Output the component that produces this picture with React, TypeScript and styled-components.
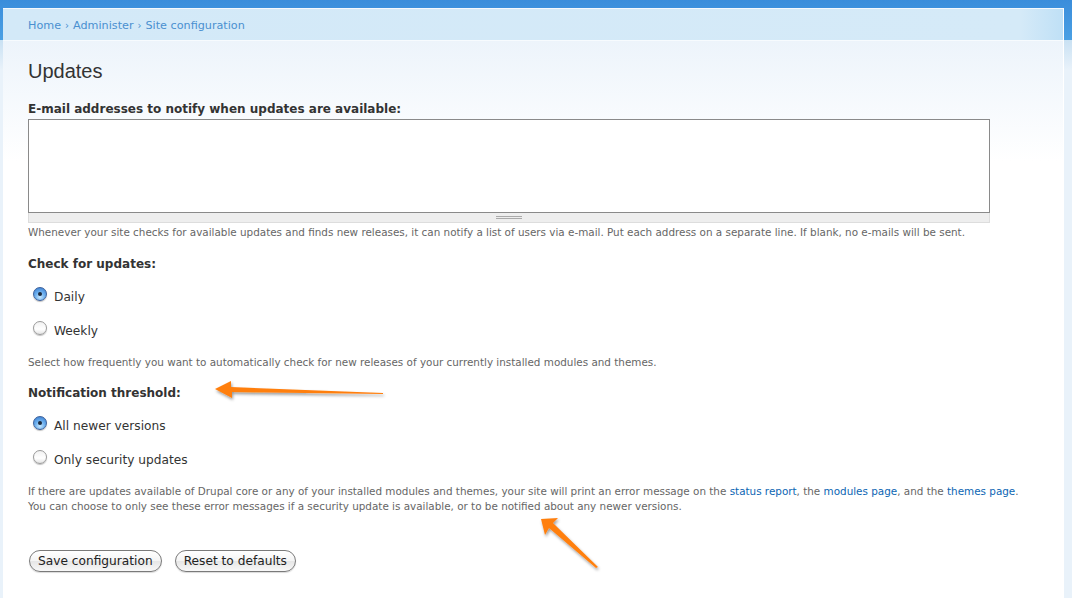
import React from 'react';
import styled, { createGlobalStyle } from 'styled-components';

const GlobalStyle = createGlobalStyle`
  html, body {
    margin: 0;
    padding: 0;
  }
  body {
    font-family: "DejaVu Sans", Verdana, sans-serif;
    color: #333;
  }
`;

const Page = styled.div`
  position: relative;
  width: 1072px;
  height: 598px;
  overflow: hidden;
  box-sizing: border-box;
  padding: 8px 8px 0 3px;
  background: linear-gradient(
    to bottom,
    #3a8ddb 0,
    #4aa0e4 40px,
    #c9e1f3 40px,
    #e9f2fa 70px,
    #e9f2fa 100%
  );
`;

const Panel = styled.div`
  height: 100%;
  background: #fff;
  border-right: 1px solid #fff;
  border-top: 1px solid #f4f9fd;
  box-sizing: border-box;
`;

const Breadcrumb = styled.div`
  height: 32px;
  display: flex;
  align-items: center;
  padding: 2px 0 0 25px;
  box-sizing: border-box;
  font-size: 11.2px;
  background: linear-gradient(to right, #d3e9f8 0, #d5eaf8 96%, #bfe0f6 100%);
  border-bottom: 1px solid #f7fbfe;
  color: #4a90d0;

  a {
    color: #4a90d0;
    text-decoration: none;
  }
`;

const Sep = styled.span`
  margin: 0 4px;
  font-size: 10px;
`;

const Content = styled.div`
  padding: 18px 0 0 25px;
  background: linear-gradient(to bottom, #edf4fb 0, #ffffff 120px);
`;

const Title = styled.h1`
  margin: 0 0 18px;
  font-family: "Liberation Sans", Arial, sans-serif;
  font-weight: normal;
  font-size: 20px;
  line-height: 24px;
  color: #333;
`;

const Label = styled.div`
  font-weight: bold;
  font-size: 12px;
  line-height: 16px;
  color: #333;
`;

const TextArea = styled.div`
  margin-top: 2px;
  width: 962px;
  box-sizing: border-box;
`;

const Box = styled.div`
  height: 94px;
  border: 1px solid #8a8a8a;
  background: #fff;
  box-sizing: border-box;
`;

const Grippie = styled.div`
  height: 10px;
  background: #eee;
  border: 1px solid #ddd;
  border-top: none;
  display: flex;
  justify-content: center;
  align-items: center;
  box-sizing: border-box;

  &::after {
    content: '';
    width: 26px;
    height: 3px;
    border-top: 1px solid #aaa;
    border-bottom: 1px solid #aaa;
    box-sizing: border-box;
  }
`;

const Description = styled.div<{ $mt?: number }>`
  margin-top: ${p => p.$mt ?? 2}px;
  font-size: 10.4px;
  line-height: 15px;
  color: #666;

  a {
    color: #0b65b3;
    text-decoration: none;
  }
`;

const Section = styled.div<{ $mt: number }>`
  margin-top: ${p => p.$mt}px;
`;

const Options = styled.div`
  margin-top: 15px;
  padding-left: 5px;
  display: flex;
  flex-direction: column;
  gap: 14px;
`;

const Option = styled.label`
  display: flex;
  align-items: center;
  gap: 7px;
  height: 20px;
  font-size: 12.2px;
  color: #333;
`;

const Radio = styled.span<{ $checked?: boolean }>`
  width: 14px;
  height: 14px;
  border-radius: 50%;
  box-sizing: border-box;
  position: relative;
  top: -3px;
  border: 1px solid ${p => (p.$checked ? '#3a5f9a' : '#9a9a9a')};
  background: ${p =>
    p.$checked
      ? 'radial-gradient(circle at 50% 75%, #c6e6fd 0, #6db0ee 45%, #3477cc 100%)'
      : 'linear-gradient(to bottom, #f2f2f2 0, #ffffff 60%, #e4e4e4 100%)'};
  box-shadow: 0 1px 1px rgba(0, 0, 0, 0.25);

  &::after {
    content: '';
    display: ${p => (p.$checked ? 'block' : 'none')};
    position: absolute;
    left: 50%;
    top: 50%;
    width: 4px;
    height: 4px;
    margin: -2px 0 0 -2px;
    border-radius: 50%;
    background: #1c2b3f;
  }
`;

const Buttons = styled.div`
  margin-top: 36px;
  display: flex;
  gap: 13px;
  padding-left: 1px;
`;

const Button = styled.button`
  height: 22px;
  padding: 0 8px;
  border: 1px solid #7a7a7a;
  border-radius: 11px;
  background: linear-gradient(to bottom, #ffffff 0, #f4f4f4 50%, #e6e6e6 51%, #f8f8f8 100%);
  font-family: "DejaVu Sans", Verdana, sans-serif;
  font-size: 12.2px;
  color: #222;
  box-shadow: 0 1px 1px rgba(0, 0, 0, 0.15);
`;

const Arrow = styled.svg`
  position: absolute;
  left: 0;
  top: 0;
  pointer-events: none;
`;

const App = () => {
  return (
    <>
      <GlobalStyle />
      <Page>
        <Panel>
          <Breadcrumb>
            <a href="#">Home</a>
            <Sep>›</Sep>
            <a href="#">Administer</a>
            <Sep>›</Sep>
            <a href="#">Site configuration</a>
          </Breadcrumb>
          <Content>
            <Title>Updates</Title>
            <Label>E-mail addresses to notify when updates are available:</Label>
            <TextArea>
              <Box />
              <Grippie />
            </TextArea>
            <Description>
              Whenever your site checks for available updates and finds new releases, it can
              notify a list of users via e-mail. Put each address on a separate line. If blank,
              no e-mails will be sent.
            </Description>

            <Section $mt={16}>
              <Label>Check for updates:</Label>
              <Options>
                <Option>
                  <Radio $checked />
                  Daily
                </Option>
                <Option>
                  <Radio />
                  Weekly
                </Option>
              </Options>
              <Description $mt={14}>
                Select how frequently you want to automatically check for new releases of your
                currently installed modules and themes.
              </Description>
            </Section>

            <Section $mt={15}>
              <Label>Notification threshold:</Label>
              <Options>
                <Option>
                  <Radio $checked />
                  All newer versions
                </Option>
                <Option>
                  <Radio />
                  Only security updates
                </Option>
              </Options>
              <Description $mt={14}>
                If there are updates available of Drupal core or any of your installed modules and
                themes, your site will print an error message on the{' '}
                <a href="#">status report</a>, the <a href="#">modules page</a>, and the{' '}
                <a href="#">themes page</a>.
                <br />
                You can choose to only see these error messages if a security update is available,
                or to be notified about any newer versions.
              </Description>
            </Section>

            <Buttons>
              <Button>Save configuration</Button>
              <Button>Reset to defaults</Button>
            </Buttons>
          </Content>
        </Panel>

        <Arrow width="1072" height="598" viewBox="0 0 1072 598">
          <defs>
            <filter id="shadow" x="-20%" y="-50%" width="140%" height="200%">
              <feDropShadow dx="1" dy="2" stdDeviation="1.5" floodColor="#000" floodOpacity="0.4" />
            </filter>
          </defs>
          <g fill="#ff7f0f" filter="url(#shadow)">
            <polygon points="383,394 232,392 232,398 215,389 231,381 231,387 383,393" />
            <polygon points="598,567 553,523 558,518 541,519 545,535 549,528 596,568" />
          </g>
        </Arrow>
      </Page>
    </>
  );
};

export default App;
